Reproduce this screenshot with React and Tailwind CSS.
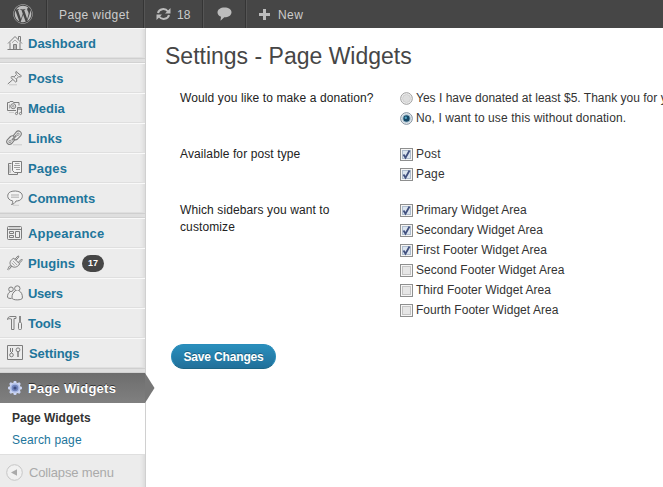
import React from 'react';
import { FaWordpress } from 'react-icons/fa';

function Icon({ children, className = '' }) {
  return (
    <svg viewBox="0 0 16 16" className={`h-4 w-4 shrink-0 ${className}`} fill="none" stroke="#7d7d7d" strokeWidth="1" strokeLinejoin="round">
      {children}
    </svg>
  );
}

const icons = {
  dashboard: (
    <Icon>
      <path d="M1 8.5 8 1.5l7 7M3 7.5v7h10v-7M11.5 4.5v-3h2v5M.5 14.5h15" />
      <path d="M5 7.8 8 5l3 2.8" stroke="#aaa" />
      <path d="M6.5 14.5V9.5h3v5M8 9.5v5" />
    </Icon>
  ),
  posts: (
    <Icon>
      <path d="M9 1.5 14.5 6l-1.3 1-1.5-.4-2.2 2.3.3 2.4-1 .9-5-4.700 1-.9 2.500.2 2.200-2.400-.8-1.600zM5.800 9.600.8 14" />
      <path d="m9.600 4.800 2 1.700M6.800 7l2.500 2.200" stroke="#aaa" />
      <path d="M2 14.800h8" stroke="#c8c8c8" />
    </Icon>
  ),
  media: (
    <Icon>
      <path d="M9 10.500H.500v-8h2l.5-1h3l.5 1h5.500v3" />
      <circle cx="6.200" cy="6.200" r="2.500" />
      <circle cx="6.200" cy="6.200" r=".8" stroke="#999" />
      <path d="M2.500 4.500v4" stroke="#aaa" />
      <path d="M10.500 13.500V7.500h4v6M10.500 9h4" />
      <circle cx="9.500" cy="13.500" r="1.100" fill="#eee" />
      <circle cx="13.500" cy="13.500" r="1.100" fill="#eee" />
      <path d="M2 12.500h5" stroke="#ccc" />
    </Icon>
  ),
  links: (
    <Icon className="-translate-x-px">
      <path d="M7 6.200 10.200 2c2.600-2.600 6.600.5 4.500 3.600L11.600 9c-1.300 1-3 .9-4-.2" strokeWidth="1.100" />
      <path d="m9 9.300-3.200 4.200c-2.700 2.400-6.600-.5-4.500-3.600l3.200-3.400c1.300-1 3-.7 3.900.4" strokeWidth="1.100" />
      <path d="m6 10.200 4.300-4.800" stroke="#8a8a8a" strokeWidth="1.800" />
      <ellipse cx="12" cy="4.300" rx="1.300" ry="1" transform="rotate(-45 12 4.300)" stroke="#999" />
      <ellipse cx="4" cy="11.400" rx="1.300" ry="1" transform="rotate(-45 4 11.400)" stroke="#999" />
      <path d="M7 14.800h9" stroke="#ccc" />
    </Icon>
  ),
  pages: (
    <Icon>
      <path d="M4.500 3.500h-3v11h9v-2" />
      <path d="M5.500 1.500h9v11h-7l-2-2z" fill="#f4f4f4" />
      <path d="M8 3.500h4.500M7 5.500h6M7 7.500h6M9 9.500h4M3 5v8" stroke="#a0a0a0" />
    </Icon>
  ),
  comments: (
    <Icon>
      <path d="M5.500 10.800C-.5 9.800-.5 3.500 3.500 1.800c3-1.200 7-1 9.500.4 3.500 2 3 6.800-.8 8.300-1.200.4-2.300.5-3.200.5C8 13 6.500 14.300 4.500 14.500c1.200-1 1.500-2.200 1-3.700z" fill="#f3f3f3" />
      <path d="M4 5h8M4 7.300h8" stroke="#c4c4c4" strokeWidth="1.500" />
      <path d="M6 15.300h6" stroke="#ccc" />
    </Icon>
  ),
  appearance: (
    <Icon>
      <rect x=".5" y="1.500" width="14" height="13" rx="1" />
      <path d="M1 4.500h13M2.500 6.500h4v2h-4zM2.500 10.500h4v2h-4zM8.500 6.500h4v6h-4z" />
      <path d="M2 3h11" stroke="#bbb" />
    </Icon>
  ),
  plugins: (
    <Icon>
      <path d="m6.800 3.300 5.900 5.500c-2 3.600-6 4.500-8.600 1.900C1.700 8.200 3.500 4.600 6.800 3.300zM8 4.300 11 .800l1 .9-3 3.500M11.300 7.400l3.200-3.300 1 1-3.300 3.200" />
      <path d="M4 10.700c-3 .3-2 2.300-3.500 4M5 11.500c-2 0-1.500 2.500-3.500 3.300" />
      <path d="m6 6 4 4M4.800 7.800l2.800 2.900" stroke="#aaa" />
    </Icon>
  ),
  users: (
    <Icon>
      <circle cx="10.300" cy="3.500" r="2.700" />
      <circle cx="4" cy="4.300" r="2.300" />
      <path d="M4.500 13.500c-2 0-4-.3-4-1.500 0-2.500.8-4.200 2.700-5.300M7.500 6.500 9 6" />
      <path d="M8.300 6C6.200 7 4.800 9.500 5 13c.2 2.500 10.200 2.500 10.400 0 .2-3.500-1.100-6-3.200-7" fill="#f0f0f0" />
    </Icon>
  ),
  tools: (
    <Icon>
      <path d="M.500 4.500c.3-2.300 1.500-3 3.500-3h5v2H7v11H4.500V4C2.500 3.500 1.500 3.500.5 4.500" />
      <path d="M12.500 1v6M13.500 1v6" stroke="#8a8a8a" />
      <rect x="11.500" y="7.500" width="3" height="7" rx="1" />
    </Icon>
  ),
  settings: (
    <Icon>
      <rect x=".5" y=".5" width="15" height="14" />
      <path d="M3.500 3v4M5.500 3v4M4.500 7v1" />
      <circle cx="4.500" cy="10" r="1.800" />
      <circle cx="11" cy="4.800" r="1.900" />
      <path d="M11 6.700V12" strokeWidth="1.500" />
    </Icon>
  ),
};

const groups = [
  [['dashboard', 'Dashboard']],
  [['posts', 'Posts'], ['media', 'Media'], ['links', 'Links'], ['pages', 'Pages', null, 'tracking-[0.15px]'], ['comments', 'Comments']],
  [
    ['appearance', 'Appearance', null, 'tracking-[0.2px]'],
    ['plugins', 'Plugins', 17],
    ['users', 'Users', null, '-tracking-[0.3px]'],
    ['tools', 'Tools', null, '-tracking-[0.1px]'],
    ['settings', 'Settings', null, 'pl-px -tracking-[0.1px]'],
  ],
];

function Separator() {
  return <div className="h-[5px] border-y border-t-[#cfcfcf] border-b-[#d2d2d2] bg-[#dfdfdf]" />;
}

function MenuItem({ icon, label, count, labelClass = '' }) {
  return (
    <a className="flex h-[30px] items-center border-t border-b border-t-[#f9f9f9] border-b-[#dfdfdf] pl-[7px] text-[13px] font-bold text-[#21759b]">
      {icons[icon]}
      <span className={`ml-[5px] pt-[2px] ${labelClass}`}>{label}</span>
      {count && (
        <span className="ml-[7px] flex h-[17px] w-[22px] items-center justify-center rounded-full bg-[#464646] pt-px text-[9px] leading-none text-white">{count}</span>
      )}
    </a>
  );
}

function Gear() {
  return (
    <svg viewBox="0 0 16 16" className="h-4 w-4 shrink-0">
      <g stroke="#c4cef0" strokeWidth="2.600">
        <path d="M8 1v14M1 8h14M3 3l10 10M13 3 3 13" />
      </g>
      <circle cx="8" cy="8" r="5.300" fill="#aebde8" stroke="#dce3f8" strokeWidth=".8" />
      <circle cx="8" cy="8" r="3.300" fill="#7185bd" />
      <circle cx="8" cy="8" r="1.600" fill="#3d4c80" />
    </svg>
  );
}

function Sidebar() {
  return (
    <nav className="relative w-[146px] shrink-0 border-r border-[#d0d0d0] bg-[#ececec] shadow-[inset_-6px_0_5px_-5px_rgba(0,0,0,0.1)]">
      {groups.map((group, i) => (
        <div key={i}>
          {group.map(([icon, label, count, labelClass]) => (
            <MenuItem key={label} icon={icon} label={label} count={count} labelClass={labelClass} />
          ))}
          <Separator />
        </div>
      ))}
      <div className="relative flex h-[30px] items-center bg-linear-to-b from-[#6d6d6d] to-[#808080] pl-[7px] text-[13px] font-bold text-white [text-shadow:0_-1px_0_#333]">
        <Gear />
        <span className="ml-[5px] pt-[2px] tracking-[0.25px]">Page Widgets</span>
        <svg viewBox="0 0 10 30" className="absolute top-0 left-[145px] h-[30px] w-[10px]">
          <path d="M0 0 9.500 15 0 30z" fill="#777" />
        </svg>
      </div>
      <div className="flex h-[52px] flex-col border-b border-[#dfdfdf] bg-white pt-[4px] pl-3 text-[12px] leading-[22px]">
        <span className="font-bold text-[#333]">Page Widgets</span>
        <span className="tracking-[0.15px] text-[#21759b]">Search page</span>
      </div>
      <div className="flex h-8 items-center pt-[2px] pl-[6px] text-[13px] text-[#aaa]">
        <svg viewBox="0 0 17 17" className="h-[17px] w-[17px]">
          <circle cx="8.500" cy="8.500" r="7.800" fill="#f1f1f1" stroke="#c6c6c6" />
          <path d="m5 8.500 6-3.200v6.400z" fill="#aaa" />
        </svg>
        <span className="ml-[6px] pt-[2px] -tracking-[0.15px]">Collapse menu</span>
      </div>
    </nav>
  );
}

function AdminBar() {
  return (
    <header className="flex h-7 shrink-0 bg-[#464646] text-[12px] text-[#ccc]">
      <div className="flex w-[47px] items-center border-r border-[#353535] pl-[13px] text-[20px] text-[#bdbdbd]">
        <FaWordpress />
      </div>
      <div className="flex w-[97px] items-center border-r border-l border-r-[#353535] border-l-[#555] pt-px pl-[11px] tracking-[0.4px]">Page widget</div>
      <div className="flex w-[59px] items-center border-r border-l border-r-[#353535] border-l-[#555] pl-[11px]">
        <svg viewBox="0 0 15 14" className="h-[14px] w-[15px]" fill="none" stroke="#bcbcbc" strokeWidth="2">
          <path d="M2 6C3 1.800 9 .500 12 4.500M13 8c-1 4.200-7 5.500-10 1.500" />
          <path d="M14.500 1v5.500H9zM.500 13V7.500H6z" fill="#bcbcbc" stroke="none" />
        </svg>
        <span className="ml-[6px] pt-px">18</span>
      </div>
      <div className="flex w-[43px] items-center border-r border-l border-r-[#353535] border-l-[#555] pl-[13px]">
        <svg viewBox="0 0 15 14" className="h-[14px] w-[15px]" fill="#bcbcbc">
          <path d="M7.500.5c4 0 7 2 7 4.800 0 3-3 5-7.200 5L3.500 13.800 4 9.700C1.800 8.900.5 7.300.5 5.500.5 2.500 3.500.5 7.500.5z" />
        </svg>
      </div>
      <div className="flex items-center border-l border-[#555] pl-[12px]">
        <svg viewBox="0 0 11 11" className="h-[11px] w-[11px]" fill="#bcbcbc">
          <path d="M4 0h3v4h4v3H7v4H4V7H0V4h4z" />
        </svg>
        <span className="ml-[8px] pt-px tracking-[0.4px]">New</span>
      </div>
    </header>
  );
}

function Checkbox({ checked }) {
  return (
    <svg viewBox="0 0 13 13" className="h-[13px] w-[13px] shrink-0">
      <rect x=".5" y=".5" width="12" height="12" fill="#f6f6f6" stroke="#8e8f8f" />
      <rect x="2.500" y="2.500" width="8" height="8" fill={checked ? '#dce5ef' : '#e6e6e6'} stroke={checked ? '#aebccd' : '#c4c4c4'} />
      {checked && <path d="m3.500 6.500 2 3.300 4-7.300" fill="none" stroke="#42517f" strokeWidth="1.800" />}
    </svg>
  );
}

function Radio({ checked }) {
  return (
    <svg viewBox="0 0 13 13" className="h-[13px] w-[13px] shrink-0">
      <circle cx="6.500" cy="6.500" r="5.800" fill="#f4f4f4" stroke={checked ? '#788999' : '#9a9a9a'} />
      <circle cx="6.500" cy="6.500" r="4" fill={checked ? '#b9d5e5' : '#dedede'} stroke={checked ? '#a5bccb' : '#cacaca'} strokeWidth=".8" />
      {checked && <circle cx="6.500" cy="6.500" r="3.200" fill="#174967" />}
      {checked && <circle cx="5.800" cy="5.700" r="1.200" fill="#56a8c8" />}
    </svg>
  );
}

function Option({ label, radio, checked, className = 'tracking-[0.04px]' }) {
  return (
    <label className="flex h-5 items-center whitespace-nowrap">
      <span className="pt-px">{radio ? <Radio checked={checked} /> : <Checkbox checked={checked} />}</span>
      <span className={`ml-[3px] ${className}`}>{label}</span>
    </label>
  );
}

function Field({ label, children, className }) {
  return (
    <div className={`flex ${className}`}>
      <div className="w-[220px] shrink-0 pt-[2px] leading-[17px] tracking-[0.11px] text-[#222]">{label}</div>
      <div className="text-[#333]">{children}</div>
    </div>
  );
}

export default function App() {
  return (
    <div className="flex h-[487px] w-[663px] flex-col overflow-hidden bg-white font-['Liberation_Sans',Arial,sans-serif] text-[12px]">
      <AdminBar />
      <div className="flex min-h-0 flex-1">
        <Sidebar />
        <main className="min-w-0 flex-1 overflow-hidden pl-[19px]">
          <h1 className="mt-[12px] text-[23px] leading-8 text-[#464646]">Settings - Page Widgets</h1>
          <div className="mt-[16px] pl-[15px]">
            <Field label="Would you like to make a donation?" className="h-14">
              <Option radio label="Yes I have donated at least $5. Thank you for your" className="tracking-[0.01px]" />
              <Option radio checked label="No, I want to use this without donation." className="tracking-[0.1px]" />
            </Field>
            <Field label="Available for post type" className="h-14">
              <Option checked label="Post" className="tracking-[0.2px]" />
              <Option checked label="Page" className="tracking-[0.2px]" />
            </Field>
            <Field label={<>Which sidebars you want to<br />customize</>} className="h-[144px]">
              <Option checked label="Primary Widget Area" />
              <Option checked label="Secondary Widget Area" />
              <Option checked label="First Footer Widget Area" />
              <Option label="Second Footer Widget Area" />
              <Option label="Third Footer Widget Area" />
              <Option label="Fourth Footer Widget Area" />
            </Field>
          </div>
          <button className="ml-[6px] flex h-[25px] w-[105px] items-center justify-center rounded-full border border-[#298cba] border-b-[#1c6585] bg-linear-to-b from-[#2a8fbd] to-[#21709a] text-[12px] font-bold -tracking-[0.15px] text-white [text-shadow:0_-1px_0_rgba(0,0,0,0.3)]">
            Save Changes
          </button>
        </main>
      </div>
    </div>
  );
}
